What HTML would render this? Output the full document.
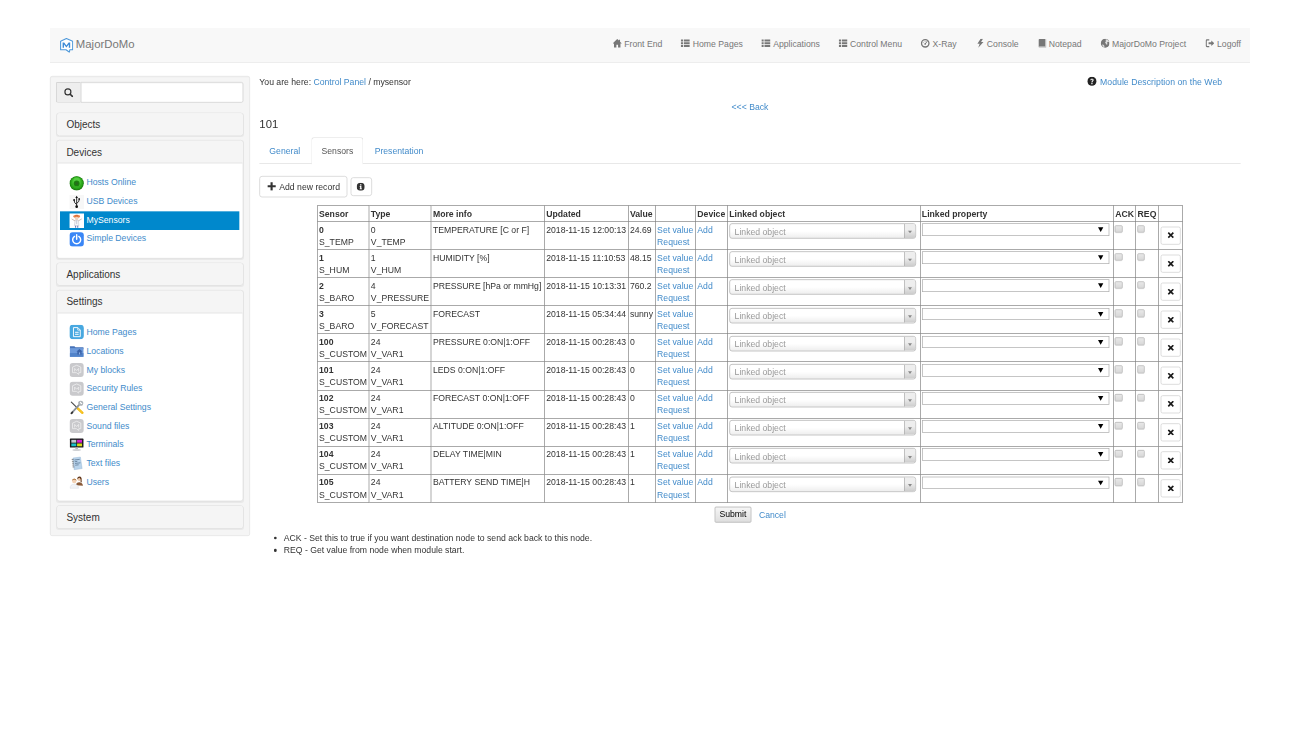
<!DOCTYPE html>
<html>
<head>
<meta charset="utf-8">
<title>MajorDoMo</title>
<style>
*{box-sizing:border-box;}
html,body{margin:0;padding:0;width:1300px;height:731px;overflow:hidden;background:#fff;}
#stage{position:absolute;left:0;top:0;width:1950px;height:1097px;transform-origin:0 0;transform:scale(0.6666667);
  font-family:"Liberation Sans",sans-serif;font-size:13px;line-height:18.57px;color:#333;}
a{color:#428bca;text-decoration:none;}
svg{display:inline-block;vertical-align:baseline;}
.gi{width:13px;height:13px;position:relative;top:1px;fill:currentColor;}
#wrap{position:absolute;left:75px;top:42.2px;width:1800px;}

/* NAVBAR */
.navbar{position:relative;height:51.57px;background:#f8f8f8;border-bottom:1px solid #e7e7e7;margin-bottom:20px;}
.brand{position:absolute;left:15px;top:0;height:50.57px;padding:16px 0;font-size:17px;line-height:18.57px;color:#777;white-space:nowrap;}
.brand .logo{position:absolute;left:-0.2px;top:14.5px;}
.brand span{position:absolute;left:23.8px;top:16.3px;}
.nav-r{position:absolute;left:0;top:0;color:#777;}
.ni{position:absolute;top:15.8px;width:13.7px;height:13.7px;margin-left:-0.3px;fill:currentColor;}
.nt{position:absolute;top:16px;line-height:18.57px;white-space:nowrap;}

/* SIDEBAR */
#side{position:absolute;left:0;top:71.57px;width:300px;}
.well{background:#f5f5f5;border:1px solid #e3e3e3;border-radius:3px;padding:9px 9px 10.4px;box-shadow:inset 0 1px 1px rgba(0,0,0,.05);}
.igroup{display:flex;height:31px;margin:-1px 0 15px -1.2px;}
.addon{width:37.2px;height:31px;border:1px solid #ccc;border-right:0;border-radius:3px 0 0 3px;background:#eee;color:#333;text-align:center;}
.gs{width:13.6px;height:13.6px;margin-top:8.6px;margin-left:0.6px;}
.sinput{flex:1;height:31px;border:1px solid #ccc;border-radius:0 3px 3px 0;background:#fff;box-shadow:inset 0 1px 1px rgba(0,0,0,.075);}
.panel{background:#fff;border:1px solid #ddd;border-radius:4px;box-shadow:0 1px 1px rgba(0,0,0,.05);margin-top:5.5px;overflow:hidden;}
.igroup + .panel{margin-top:0;}
.ph{background:#f5f5f5;color:#333;height:33.3px;padding:9.4px 0 0 13.6px;font-size:15px;line-height:16.5px;}
.ph.open{height:34.2px;border-bottom:1px solid #ddd;}
.pb{padding:15.9px 4.6px 13.6px 4.4px;}
.pb:not(.p2) .snav li{line-height:26.5px;}
.pb.p2{padding:14.6px 4.6px 13.2px 4.4px;}
.snav{list-style:none;margin:0;padding:0;}
.snav li{height:28.13px;line-height:28.13px;padding:0 0 0 14px;white-space:nowrap;}
.snav li.act{background:#0088cc;}
.snav li.act a{color:#fff;}
.snav .ic{width:22px;height:22px;vertical-align:top;margin:3px 3.3px 0 0;}

/* CONTENT */
#main{position:absolute;left:314px;top:71.57px;width:1472px;}
.bc{height:18.57px;white-space:nowrap;}
.bc .mod{float:right;margin-right:27.8px;}
.bc .mod .gi{width:13.8px;height:13.8px;top:1.3px;margin-right:1.5px;fill:#222;}
.bc .mod a{letter-spacing:0.07px;}
.back{text-align:center;margin-top:19.6px;margin-bottom:-0.6px;}
.ttl{margin:8px 0 9px;font-size:17px;line-height:18.7px;font-weight:normal;}
.tabs{list-style:none;margin:0;padding:0;height:40.3px;border-bottom:1px solid #ddd;display:flex;}
.tabs li{margin-right:2px;margin-bottom:-1px;}
.tabs li a{display:block;padding:11.5px 14px 9.2px;line-height:18.57px;border:1px solid transparent;border-radius:4px 4px 0 0;}
.tabs li.on a{color:#555;background:#fff;border-color:#ddd #ddd #fff;}
.btns{margin-top:18.3px;height:32.57px;white-space:nowrap;}
.btn{display:inline-block;height:31.6px;padding:6.9px 10.2px 4px 11.4px;border:1px solid #ccc;border-radius:4px;background:#fff;color:#333;font-size:13px;line-height:18.57px;vertical-align:top;}
.btn.ib{height:28px;width:32px;margin-top:2px;margin-left:1.2px;padding:3.5px 0 0 8.6px;}
.gb{width:12.8px;height:12.8px;position:relative;top:1.2px;fill:currentColor;margin-right:1.8px;}
.btn.ib .gb{width:12.2px;height:12.2px;top:2.2px;margin:0 0 0 -0.5px;}
table.dt{border-collapse:collapse;table-layout:fixed;width:1298px;margin:11.3px auto 0;}
table.dt td,table.dt th{border:1px solid #808080;padding:3px 2px 1px 2px;vertical-align:top;text-align:left;white-space:nowrap;overflow:hidden;line-height:18.57px;}
table.dt tr{height:42.17px;}
table.dt tr.hd{height:23.57px;}
.s2{position:relative;width:280px;height:23px;margin-top:-0.5px;border:1px solid #aaa;border-radius:4px;background:linear-gradient(to top,#eee 0%,#fff 50%);color:#999;line-height:21.5px;padding:1.3px 0 0 7px;overflow:hidden;}
.s2 i{position:absolute;right:0;top:0;width:17px;height:100%;border-left:1px solid #aaa;background:linear-gradient(to top,#ccc 0%,#eee 60%);}
.s2 i b{position:absolute;left:5.2px;top:10.2px;width:0;height:0;border:3.5px solid transparent;border-top:4.5px solid #888;border-bottom:0;}
.sel{position:relative;width:281px;height:18.7px;margin-top:-0.5px;border:1px solid #a9a9a9;background:#fff;}
.sel b{position:absolute;right:8px;top:5px;width:0;height:0;border:4px solid transparent;border-top:7px solid #000;border-bottom:0;}
.cb{display:block;width:11.5px;height:11.5px;margin:2px 0 0 -0.5px;border:1px solid #b0b0b0;border-radius:2px;background:linear-gradient(#e8e8e8,#d8d8d8);box-shadow:0 1px 0 rgba(0,0,0,.08);}
td.xc{padding:0 !important;}
.xb{display:block;width:30px;height:27px;margin:7px 0 0 3px;border:1px solid #ccc;border-radius:3px;background:#fff;text-align:center;line-height:25px;}
.gx{width:10.4px;height:9.4px;fill:#1a1a1a;vertical-align:middle;margin-top:-2px;}
.sub{text-align:center;margin-top:5.9px;height:24.25px;line-height:25.6px;padding-left:0.6px;}
.sbtn{display:inline-block;height:24.25px;line-height:22.6px;padding:0 6.4px;border:1px solid #a6a6a6;border-radius:2px;background:linear-gradient(#f6f6f6,#dedede);color:#000;margin-right:11.3px;vertical-align:top;}
.notes{margin:13.4px 0 0;padding:0 0 0 36.6px;list-style:none;}
.notes li{line-height:18.4px;position:relative;}
.notes li:before{content:"";position:absolute;left:-14.3px;top:7.4px;width:4.2px;height:4.2px;border-radius:50%;background:#333;}
</style>
</head>
<body>
<div id="stage">
<div id="wrap">

<div class="navbar">
  <div class="brand"><svg class="logo" width="20" height="22.4" viewBox="0 0 20 22.4"><path d="M9.6 0.9 L19 4.9 V17.6 H14.6 L14.2 21.4 L9 17.6 H0.9 V4.9 Z" fill="#fff" stroke="#4d98da" stroke-width="1.6" stroke-linejoin="round"/><path d="M3.9 14.8 V6.6 H6.3 L9.6 11.2 L12.9 6.6 H15.3 V14.8 H13.2 V9.6 L9.6 14.3 L6 9.6 V14.8 Z" fill="#3d8bd6"/></svg><span>MajorDoMo</span></div>
  <div class="nav-r">
<svg class="ni" style="left:844.2px" viewBox="0 0 13 13"><path d="M6.5 0.4 L0.2 6.5 L1.1 7.4 L1.9 6.7 V12.5 H5.3 V8.6 H7.7 V12.5 H11.1 V6.7 L11.9 7.4 L12.8 6.5 L10.5 4.3 V1.5 H8.9 V2.7 Z"/></svg><span class="nt" style="left:861.4px">Front End</span>
<svg class="ni" style="left:946.5px" viewBox="0 0 13 13"><path d="M0.2 1.1 H3.3 V4 H0.2 Z M4.5 1.1 H12.8 V4 H4.5 Z M0.2 5.1 H3.3 V8 H0.2 Z M4.5 5.1 H12.8 V8 H4.5 Z M0.2 9.1 H3.3 V12 H0.2 Z M4.5 9.1 H12.8 V12 H4.5 Z"/></svg><span class="nt" style="left:964.2px">Home Pages</span>
<svg class="ni" style="left:1067.2px" viewBox="0 0 13 13"><path d="M0.2 1.1 H3.3 V4 H0.2 Z M4.5 1.1 H12.8 V4 H4.5 Z M0.2 5.1 H3.3 V8 H0.2 Z M4.5 5.1 H12.8 V8 H4.5 Z M0.2 9.1 H3.3 V12 H0.2 Z M4.5 9.1 H12.8 V12 H4.5 Z"/></svg><span class="nt" style="left:1084.7px">Applications</span>
<svg class="ni" style="left:1182.9px" viewBox="0 0 13 13"><path d="M0.2 1.1 H3.3 V4 H0.2 Z M4.5 1.1 H12.8 V4 H4.5 Z M0.2 5.1 H3.3 V8 H0.2 Z M4.5 5.1 H12.8 V8 H4.5 Z M0.2 9.1 H3.3 V12 H0.2 Z M4.5 9.1 H12.8 V12 H4.5 Z"/></svg><span class="nt" style="left:1200.0px">Control Menu</span>
<svg class="ni" style="left:1306.3px" viewBox="0 0 13 13"><circle cx="6.5" cy="6.6" r="5.3" fill="none" stroke="currentColor" stroke-width="1.9"/><path d="M6.5 7.6 L9.2 3.9" stroke="currentColor" stroke-width="1.4" stroke-linecap="round" fill="none"/><circle cx="6.5" cy="7.4" r="1.2"/><circle cx="3.6" cy="5.2" r="0.7"/><circle cx="6.3" cy="3.6" r="0.7"/></svg><span class="nt" style="left:1323.9px">X-Ray</span>
<svg class="ni" style="left:1389.0px" viewBox="0 0 13 13"><path d="M6.6 0.2 L2 7.3 H5.2 L3.2 12.9 L10.6 4.9 H7.2 L10 0.2 Z"/></svg><span class="nt" style="left:1405.3px">Console</span>
<svg class="ni" style="left:1482.0px" viewBox="0 0 13 13"><path d="M1 1.4 Q1 0.4 2.2 0.4 H10.4 V11.2 H2.4 Q1 11.2 1 12.2 Z"/><path d="M10.4 0.9 H11.8 V12.7 H2.4 Q1 12.7 1 11.9 Q1.2 11.6 2.4 11.6 H10.9 V0.9 Z" opacity=".55"/></svg><span class="nt" style="left:1498.2px">Notepad</span>
<svg class="ni" style="left:1575.9px" viewBox="0 0 13 13"><circle cx="6.5" cy="6.5" r="6.3"/><path d="M7.6 1 C9.5 1.2 11.3 2.6 11.9 4.6 C11 5 10 4.4 9.4 5.2 C8.8 6.2 10 6.8 9.6 8 C9.2 9 8 8.6 7.8 7.6 C7.6 6.6 6.6 6.8 6.4 5.8 C6.2 4.6 7.6 4.4 7.4 3.2 C7.3 2.4 6.6 2 7.6 1 Z M2 8.4 C3 8 4.4 8.6 5 9.6 C5.6 10.6 5 11.6 5.8 12.3 C4 12.2 2.4 10.6 2 8.4 Z" fill="#f8f8f8" opacity=".8"/></svg><span class="nt" style="left:1593.0px">MajorDoMo Project</span>
<svg class="ni" style="left:1732.9px" viewBox="0 0 13 13"><path d="M5.6 0.9 H2.4 Q0.5 0.9 0.5 2.8 V10.2 Q0.5 12.1 2.4 12.1 H5.6 V10.5 H2.7 Q2.1 10.5 2.1 9.9 V3.1 Q2.1 2.5 2.7 2.5 H5.6 Z M4.6 5.2 H8.5 V2.5 L12.9 6.5 L8.5 10.5 V7.8 H4.6 Z"/></svg><span class="nt" style="left:1750.5px">Logoff</span>
</div>
</div>

<div id="side">
 <div class="well">
  <div class="igroup"><div class="addon"><svg class="gs" viewBox="0 0 13 13"><circle cx="5.6" cy="5.6" r="4.3" fill="none" stroke="currentColor" stroke-width="1.7"/><path d="M8.9 8.9 L12 12" stroke="currentColor" stroke-width="2.3" stroke-linecap="round"/></svg></div><div class="sinput"></div></div>
  <div class="panel"><div class="ph">Objects</div></div>
  <div class="panel"><div class="ph open" style="padding-top:10.3px">Devices</div><div class="pb"><ul class="snav"><li><svg class="ic" viewBox="0 0 22 22"><circle cx="11" cy="11" r="10.7" fill="#1a7a0e"/><circle cx="11" cy="10.6" r="9.8" fill="#249a16"/><circle cx="11" cy="10" r="8.6" fill="#2fab1f"/><circle cx="11" cy="9" r="7" fill="#3fbb2c"/><circle cx="11" cy="7.6" r="5" fill="#54cc40"/><circle cx="11" cy="11.2" r="4.3" fill="#1c7f10"/><circle cx="11" cy="11.2" r="2" fill="#2a6a1f"/></svg><a>Hosts Online</a></li><li><svg class="ic" viewBox="0 0 22 22"><rect width="22" height="22" fill="#f7f7f7"/><g stroke="#111" stroke-width="1.3" fill="none"><path d="M11 4 V17"/><path d="M11 15 Q7.2 12.6 7.2 8.6"/><path d="M11 13 Q14.8 11 14.8 7.6"/></g><path d="M11 1.6 L13 5 H9 Z" fill="#111"/><circle cx="11" cy="18" r="2" fill="#111"/><circle cx="7.2" cy="8" r="1.4" fill="#111"/><rect x="13.6" y="5.4" width="2.4" height="2.4" fill="#111"/></svg><a>USB Devices</a></li><li class="act"><svg class="ic" viewBox="0 0 22 22"><rect width="22" height="22" fill="#fff"/><ellipse cx="11" cy="4.6" rx="5.2" ry="2" fill="#e8824a"/><rect x="8.6" y="2.2" width="4.8" height="2.6" rx="1.2" fill="#d96f3a"/><circle cx="11" cy="7.6" r="2.6" fill="#f0d2bd"/><path d="M8.6 10.4 H13.4 L14.4 18.5 H7.6 Z" fill="#f4f4f6" stroke="#b9bcc6" stroke-width=".7"/><path d="M8.6 11.4 L3.4 8.4 M13.4 11.4 L18.6 8.4" stroke="#c9b4a8" stroke-width="1.3" fill="none"/><path d="M9.4 18.5 V21.5 M12.6 18.5 V21.5" stroke="#6a78b8" stroke-width="1.6"/><path d="M11 10.6 V16" stroke="#9aa0b4" stroke-width=".7"/></svg><a>MySensors</a></li><li><svg class="ic" viewBox="0 0 22 22"><rect x="0.3" y="0.3" width="21.4" height="21.4" rx="4.5" fill="#3a86f6"/><path d="M7.8 6.6 A6 6 0 1 0 14.2 6.6" fill="none" stroke="#fff" stroke-width="2.2" stroke-linecap="round"/><path d="M11 4.2 V11" stroke="#fff" stroke-width="2.2" stroke-linecap="round"/></svg><a>Simple Devices</a></li></ul></div></div>
  <div class="panel" style="margin-top:6.4px"><div class="ph" style="height:32.2px;padding-top:8.5px">Applications</div></div>
  <div class="panel" style="margin-top:6.3px"><div class="ph open">Settings</div><div class="pb p2"><ul class="snav"><li><svg class="ic" viewBox="0 0 22 22"><rect x="0.3" y="0.3" width="21.4" height="21.4" rx="5" fill="#48a8e0"/><path d="M6.2 4.4 H12.8 L16.4 8 V18 H6.2 Z" fill="none" stroke="#fff" stroke-width="1.4" stroke-linejoin="round"/><path d="M12.6 4.6 V8.2 H16.2" fill="none" stroke="#fff" stroke-width="1.1"/><path d="M8.6 11.4 H14 M8.6 14.4 H14" stroke="#fff" stroke-width="1.5"/></svg><a>Home Pages</a></li><li><svg class="ic" viewBox="0 0 22 22"><path d="M0.8 3.2 H7.6 L9.2 4.8 H21.2 V8 H0.8 Z" fill="#4672b8"/><rect x="0.8" y="6.2" width="20.4" height="13" fill="#6d9adb"/><rect x="0.8" y="13.6" width="20.4" height="5.6" fill="#5283c9"/><path d="M10.6 11.4 L15.2 7.4 L19.8 11.4 H18.4 V15.6 H12 V11.4 Z" fill="#3b63a8"/><rect x="14.4" y="12.6" width="1.8" height="3" fill="#8fb2e6"/></svg><a>Locations</a></li><li><svg class="ic" viewBox="0 0 22 22"><rect x="0.5" y="0.5" width="21" height="21" rx="4.5" fill="#c9c9cc"/><path d="M11 3.9 L17.2 6.7 V15 H14.3 L14 17.6 L10.6 15 H4.8 V6.7 Z" fill="none" stroke="#ececee" stroke-width="1.3" stroke-linejoin="round"/><path d="M8 13.2 V8.6 L11 11.8 L14 8.6 V13.2" fill="none" stroke="#ececee" stroke-width="1.3"/></svg><a>My blocks</a></li><li><svg class="ic" viewBox="0 0 22 22"><rect x="0.5" y="0.5" width="21" height="21" rx="4.5" fill="#c9c9cc"/><path d="M11 3.9 L17.2 6.7 V15 H14.3 L14 17.6 L10.6 15 H4.8 V6.7 Z" fill="none" stroke="#ececee" stroke-width="1.3" stroke-linejoin="round"/><path d="M8 13.2 V8.6 L11 11.8 L14 8.6 V13.2" fill="none" stroke="#ececee" stroke-width="1.3"/></svg><a>Security Rules</a></li><li><svg class="ic" viewBox="0 0 22 22"><path d="M3 3.2 L13 13" stroke="#4a4a4a" stroke-width="1.7" stroke-linecap="round"/><path d="M12.6 12.6 L19.6 19.2" stroke="#f2b90d" stroke-width="3.6" stroke-linecap="round"/><path d="M13.4 13.4 L19 18.6" stroke="#ffd94d" stroke-width="1.2" stroke-linecap="round"/><path d="M3.4 19.6 L14.6 7.4" stroke="#8d9399" stroke-width="2.8" stroke-linecap="round"/><path d="M13.2 5.2 A3.9 3.9 0 1 1 16.8 8.8 L15 7 Z" fill="#aab0b6"/><path d="M16.4 2.2 L19.8 5.6 L17.8 6.2 L15.8 4.2 Z" fill="#fff"/><path d="M3.2 20 L4.6 18.4" stroke="#333" stroke-width="2.6" stroke-linecap="round"/></svg><a>General Settings</a></li><li><svg class="ic" viewBox="0 0 22 22"><rect x="0.5" y="0.5" width="21" height="21" rx="4.5" fill="#c9c9cc"/><path d="M11 3.9 L17.2 6.7 V15 H14.3 L14 17.6 L10.6 15 H4.8 V6.7 Z" fill="none" stroke="#ececee" stroke-width="1.3" stroke-linejoin="round"/><path d="M8 13.2 V8.6 L11 11.8 L14 8.6 V13.2" fill="none" stroke="#ececee" stroke-width="1.3"/></svg><a>Sound files</a></li><li><svg class="ic" viewBox="0 0 22 22"><rect x="0.8" y="1.8" width="20.4" height="13.6" rx="1" fill="#1b1b1d"/><rect x="3" y="3.8" width="7.4" height="4.2" fill="#c3c9cf"/><rect x="11.6" y="3.8" width="7.4" height="4.2" fill="#d61fd2"/><rect x="3" y="9.2" width="7.4" height="4.2" fill="#18c0c8"/><rect x="11.6" y="9.2" width="7.4" height="4.2" fill="#d4d81c"/><rect x="9" y="15.4" width="4" height="2.6" fill="#b9bcc0"/><ellipse cx="11" cy="19" rx="6.4" ry="1.6" fill="#d0d2d5"/></svg><a>Terminals</a></li><li><svg class="ic" viewBox="0 0 22 22"><path d="M5.4 3 L16.6 1.6 L19.2 18.8 L7.2 20.6 Z" fill="#b9d4ec" stroke="#8fb0d2" stroke-width=".6"/><path d="M7.6 6 L15.6 5 M8 8.6 L12 8.1 M8.4 11.2 L16.6 10.2 M8.8 13.8 L14 13.2" stroke="#55708f" stroke-width="1.1"/><path d="M3.6 5.2 H6.4 M3.9 8 H6.7 M4.2 10.8 H7 M4.5 13.6 H7.3 M4.8 16.4 H7.6" stroke="#444" stroke-width=".9"/></svg><a>Text files</a></li><li><svg class="ic" viewBox="0 0 22 22"><path d="M10 16 Q10.2 11.4 15 11.2 Q19.8 11.4 20.4 16.6 Z" fill="#8a5a38"/><circle cx="15.2" cy="6.6" r="3" fill="#ecc8ab"/><path d="M12 7.4 Q11.6 2.6 15.4 2.6 Q18.8 2.8 18.4 8 L18.6 11.6 L16.8 10.8 Q18 7 15.4 4.8 Q13.4 5 12 7.4 Z" fill="#5f3418"/><path d="M1 20.4 Q1.2 14.2 7.4 14.2 Q13.4 14.2 13.8 20.4 Z" fill="#f1f3f7" stroke="#cfd4de" stroke-width=".6"/><circle cx="7.4" cy="9.6" r="3.3" fill="#f3d2b6"/><path d="M4 9.4 Q4 5.6 7.4 5.6 Q10.8 5.6 10.8 9.4 Q9.2 7.4 7.4 7.6 Q5.4 7.4 4 9.4 Z" fill="#b07a45"/></svg><a>Users</a></li></ul></div></div>
  <div class="panel" style="margin-top:6.5px"><div class="ph" style="height:32.5px;padding-top:9.5px">System</div></div>
 </div>
</div>

<div id="main">
<div class="bc"><span class="mod"><svg class="gi" viewBox="0 0 14 14"><circle cx="7" cy="7" r="7"/><path d="M4.6 5.3 C4.6 2.3 9.6 2.4 9.6 5.2 C9.6 7.2 7.8 7 7.8 8.8 H6.2 C6.2 6.4 7.9 6.5 7.9 5.2 C7.9 4.2 6.2 4.2 6.2 5.3 Z M6.1 9.7 H7.9 V11.5 H6.1 Z" fill="#fff"/></svg> <a>Module Description on the Web</a></span>You are here: <a>Control Panel</a> / mysensor</div>
<div class="back"><a>&lt;&lt;&lt; Back</a></div>
<h4 class="ttl">101</h4>
<ul class="tabs"><li><a>General</a></li><li class="on"><a>Sensors</a></li><li><a>Presentation</a></li></ul>
<div class="btns"><span class="btn"><svg class="gb" viewBox="0 0 12 12"><path d="M4.5 0.2 H7.5 V4.5 H11.8 V7.5 H7.5 V11.8 H4.5 V7.5 H0.2 V4.5 H4.5 Z"/></svg> Add new record</span> <span class="btn ib"><svg class="gb" viewBox="0 0 12 12"><circle cx="6" cy="6" r="6"/><path d="M5 2.2 H7 V4 H5 Z M4.4 5 H7 V8.6 H7.8 V9.8 H4.4 V8.6 H5.1 V6.2 H4.4 Z" fill="#fff"/></svg></span></div>
<table class="dt"><colgroup><col style="width:77.75px"><col style="width:93.2px"><col style="width:169.85px"><col style="width:125.5px"><col style="width:40.85px"><col style="width:60.3px"><col style="width:47.95px"><col style="width:288.9px"><col style="width:290.2px"><col style="width:33.45px"><col style="width:33.8px"><col style="width:36.25px"></colgroup>
<tr class="hd"><th>Sensor</th><th>Type</th><th>More info</th><th>Updated</th><th>Value</th><th></th><th>Device</th><th>Linked object</th><th>Linked property</th><th>ACK</th><th>REQ</th><th></th></tr>
<tr><td><b>0</b><br>S_TEMP</td><td>0<br>V_TEMP</td><td>TEMPERATURE [C or F]</td><td>2018-11-15 12:00:13</td><td>24.69</td><td><a>Set value</a><br><a>Request</a></td><td><a>Add</a></td><td><div class="s2"><span>Linked object</span><i><b></b></i></div></td><td><div class="sel"><b></b></div></td><td><span class="cb"></span></td><td><span class="cb"></span></td><td class="xc"><span class="xb"><svg class="gx" viewBox="0 0 10 10"><path d="M1.9 0 L5 3.1 L8.1 0 L10 1.9 L6.9 5 L10 8.1 L8.1 10 L5 6.9 L1.9 10 L0 8.1 L3.1 5 L0 1.9 Z"/></svg></span></td></tr>
<tr><td><b>1</b><br>S_HUM</td><td>1<br>V_HUM</td><td>HUMIDITY [%]</td><td>2018-11-15 11:10:53</td><td>48.15</td><td><a>Set value</a><br><a>Request</a></td><td><a>Add</a></td><td><div class="s2"><span>Linked object</span><i><b></b></i></div></td><td><div class="sel"><b></b></div></td><td><span class="cb"></span></td><td><span class="cb"></span></td><td class="xc"><span class="xb"><svg class="gx" viewBox="0 0 10 10"><path d="M1.9 0 L5 3.1 L8.1 0 L10 1.9 L6.9 5 L10 8.1 L8.1 10 L5 6.9 L1.9 10 L0 8.1 L3.1 5 L0 1.9 Z"/></svg></span></td></tr>
<tr><td><b>2</b><br>S_BARO</td><td>4<br>V_PRESSURE</td><td>PRESSURE [hPa or mmHg]</td><td>2018-11-15 10:13:31</td><td>760.2</td><td><a>Set value</a><br><a>Request</a></td><td><a>Add</a></td><td><div class="s2"><span>Linked object</span><i><b></b></i></div></td><td><div class="sel"><b></b></div></td><td><span class="cb"></span></td><td><span class="cb"></span></td><td class="xc"><span class="xb"><svg class="gx" viewBox="0 0 10 10"><path d="M1.9 0 L5 3.1 L8.1 0 L10 1.9 L6.9 5 L10 8.1 L8.1 10 L5 6.9 L1.9 10 L0 8.1 L3.1 5 L0 1.9 Z"/></svg></span></td></tr>
<tr><td><b>3</b><br>S_BARO</td><td>5<br>V_FORECAST</td><td>FORECAST</td><td>2018-11-15 05:34:44</td><td>sunny</td><td><a>Set value</a><br><a>Request</a></td><td></td><td><div class="s2"><span>Linked object</span><i><b></b></i></div></td><td><div class="sel"><b></b></div></td><td><span class="cb"></span></td><td><span class="cb"></span></td><td class="xc"><span class="xb"><svg class="gx" viewBox="0 0 10 10"><path d="M1.9 0 L5 3.1 L8.1 0 L10 1.9 L6.9 5 L10 8.1 L8.1 10 L5 6.9 L1.9 10 L0 8.1 L3.1 5 L0 1.9 Z"/></svg></span></td></tr>
<tr><td><b>100</b><br>S_CUSTOM</td><td>24<br>V_VAR1</td><td>PRESSURE 0:ON|1:OFF</td><td>2018-11-15 00:28:43</td><td>0</td><td><a>Set value</a><br><a>Request</a></td><td><a>Add</a></td><td><div class="s2"><span>Linked object</span><i><b></b></i></div></td><td><div class="sel"><b></b></div></td><td><span class="cb"></span></td><td><span class="cb"></span></td><td class="xc"><span class="xb"><svg class="gx" viewBox="0 0 10 10"><path d="M1.9 0 L5 3.1 L8.1 0 L10 1.9 L6.9 5 L10 8.1 L8.1 10 L5 6.9 L1.9 10 L0 8.1 L3.1 5 L0 1.9 Z"/></svg></span></td></tr>
<tr><td><b>101</b><br>S_CUSTOM</td><td>24<br>V_VAR1</td><td>LEDS 0:ON|1:OFF</td><td>2018-11-15 00:28:43</td><td>0</td><td><a>Set value</a><br><a>Request</a></td><td><a>Add</a></td><td><div class="s2"><span>Linked object</span><i><b></b></i></div></td><td><div class="sel"><b></b></div></td><td><span class="cb"></span></td><td><span class="cb"></span></td><td class="xc"><span class="xb"><svg class="gx" viewBox="0 0 10 10"><path d="M1.9 0 L5 3.1 L8.1 0 L10 1.9 L6.9 5 L10 8.1 L8.1 10 L5 6.9 L1.9 10 L0 8.1 L3.1 5 L0 1.9 Z"/></svg></span></td></tr>
<tr><td><b>102</b><br>S_CUSTOM</td><td>24<br>V_VAR1</td><td>FORECAST 0:ON|1:OFF</td><td>2018-11-15 00:28:43</td><td>0</td><td><a>Set value</a><br><a>Request</a></td><td><a>Add</a></td><td><div class="s2"><span>Linked object</span><i><b></b></i></div></td><td><div class="sel"><b></b></div></td><td><span class="cb"></span></td><td><span class="cb"></span></td><td class="xc"><span class="xb"><svg class="gx" viewBox="0 0 10 10"><path d="M1.9 0 L5 3.1 L8.1 0 L10 1.9 L6.9 5 L10 8.1 L8.1 10 L5 6.9 L1.9 10 L0 8.1 L3.1 5 L0 1.9 Z"/></svg></span></td></tr>
<tr><td><b>103</b><br>S_CUSTOM</td><td>24<br>V_VAR1</td><td>ALTITUDE 0:ON|1:OFF</td><td>2018-11-15 00:28:43</td><td>1</td><td><a>Set value</a><br><a>Request</a></td><td><a>Add</a></td><td><div class="s2"><span>Linked object</span><i><b></b></i></div></td><td><div class="sel"><b></b></div></td><td><span class="cb"></span></td><td><span class="cb"></span></td><td class="xc"><span class="xb"><svg class="gx" viewBox="0 0 10 10"><path d="M1.9 0 L5 3.1 L8.1 0 L10 1.9 L6.9 5 L10 8.1 L8.1 10 L5 6.9 L1.9 10 L0 8.1 L3.1 5 L0 1.9 Z"/></svg></span></td></tr>
<tr><td><b>104</b><br>S_CUSTOM</td><td>24<br>V_VAR1</td><td>DELAY TIME|MIN</td><td>2018-11-15 00:28:43</td><td>1</td><td><a>Set value</a><br><a>Request</a></td><td><a>Add</a></td><td><div class="s2"><span>Linked object</span><i><b></b></i></div></td><td><div class="sel"><b></b></div></td><td><span class="cb"></span></td><td><span class="cb"></span></td><td class="xc"><span class="xb"><svg class="gx" viewBox="0 0 10 10"><path d="M1.9 0 L5 3.1 L8.1 0 L10 1.9 L6.9 5 L10 8.1 L8.1 10 L5 6.9 L1.9 10 L0 8.1 L3.1 5 L0 1.9 Z"/></svg></span></td></tr>
<tr><td><b>105</b><br>S_CUSTOM</td><td>24<br>V_VAR1</td><td>BATTERY SEND TIME|H</td><td>2018-11-15 00:28:43</td><td>1</td><td><a>Set value</a><br><a>Request</a></td><td><a>Add</a></td><td><div class="s2"><span>Linked object</span><i><b></b></i></div></td><td><div class="sel"><b></b></div></td><td><span class="cb"></span></td><td><span class="cb"></span></td><td class="xc"><span class="xb"><svg class="gx" viewBox="0 0 10 10"><path d="M1.9 0 L5 3.1 L8.1 0 L10 1.9 L6.9 5 L10 8.1 L8.1 10 L5 6.9 L1.9 10 L0 8.1 L3.1 5 L0 1.9 Z"/></svg></span></td></tr>
</table>
<div class="sub"><span class="sbtn">Submit</span><a>Cancel</a></div>
<ul class="notes"><li>ACK - Set this to true if you want destination node to send ack back to this node.</li><li>REQ - Get value from node when module start.</li></ul>
</div>

</div>
</div>
</body>
</html>
